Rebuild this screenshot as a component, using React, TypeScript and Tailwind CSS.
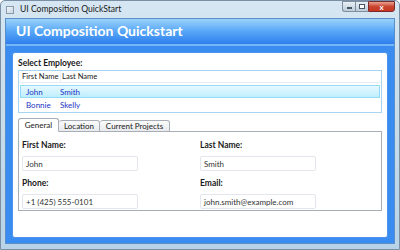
import React from "react";

const font = { fontFamily: 'Lato, "Open Sans", sans-serif' };

function Field({ label, value }: { label: string; value: string }) {
  return (
    <div className="flex flex-col">
      <div className="text-[8.5px] font-bold text-[#1a1a1a] leading-[10px] h-[10px] whitespace-nowrap">{label}</div>
      <div className="mt-[6px] w-[116px] h-[15px] border border-[#e3e6ec] rounded-[2px] bg-white flex items-center pl-[3px] text-[8px] text-[#333] whitespace-nowrap">
        {value}
      </div>
    </div>
  );
}

export default function App() {
  return (
    <div
      className="w-[400px] h-[250px] flex flex-col bg-gradient-to-b from-[#d6e6f3] via-[#c8dceb] to-[#b8d3e8] border border-[#7a8fa3] rounded-t-[5px] overflow-hidden"
      style={font}
    >
      {/* title bar */}
      <div className="h-[17px] flex items-start shrink-0">
        <div className="flex items-center h-[17px] pl-[5px]">
          <div className="w-[8px] h-[8px] bg-gradient-to-br from-[#f4f8fb] to-[#c6d4e0] border border-[#8d9aa8]" />
          <span className="ml-[6px] text-[8.6px] text-[#1b1b1b] whitespace-nowrap">UI Composition QuickStart</span>
        </div>
        <div className="ml-auto mr-[4px] flex h-[11px]">
          <div className="w-[13px] h-[11px] border border-[#7f8f9f] border-r-0 rounded-bl-[3px] bg-gradient-to-b from-[#e9f0f6] to-[#bccbd8] flex items-end justify-center pb-[2px]">
            <div className="w-[5px] h-[2px] bg-white border border-[#4a5563]" />
          </div>
          <div className="w-[13px] h-[11px] border border-[#7f8f9f] border-r-0 bg-gradient-to-b from-[#e9f0f6] to-[#bccbd8] flex items-center justify-center">
            <div className="w-[6px] h-[5px] bg-white border border-[#4a5563]" />
          </div>
          <div className="w-[27px] h-[11px] border border-[#7a2a2a] rounded-br-[3px] bg-gradient-to-b from-[#e9a195] via-[#c9452f] to-[#c8351f] flex items-center justify-center text-white text-[8px] font-bold leading-none">
            x
          </div>
        </div>
      </div>

      {/* client area */}
      <div className="flex-1 mx-[4px] mb-[5px] flex flex-col bg-[#3a8cf0] border border-[#5a8fc9]">
        {/* header */}
        <div className="h-[27px] shrink-0 bg-gradient-to-b from-[#9ad2fb] via-[#56a6f6] to-[#2f7fee] flex items-center pl-[10px] pb-[2px] border-b-[2px] border-[#74b6f6]">
          <span className="text-white font-bold text-[14px] leading-none whitespace-nowrap">UI Composition Quickstart</span>
        </div>
        {/* white panel */}
        <div className="flex-1 mx-[6px] mt-[6px] mb-[5px] bg-white rounded-[3px] border border-[#4f93ec] flex flex-col px-[5px] pt-[5px]">
          <div className="text-[8.5px] font-bold text-[#1a1a1a] leading-[10px] whitespace-nowrap">Select Employee:</div>
          {/* list */}
          <div className="mt-[2px] h-[43px] border border-[#a9d3f2] flex flex-col">
            <div className="h-[12px] flex items-center text-[7.6px] text-[#222] border-b border-[#e6eef6] whitespace-nowrap">
              <span className="pl-[3px] w-[41px]">First Name</span>
              <span className="pl-[1px] border-l border-[#e6eef6]">Last Name</span>
            </div>
            <div className="mt-[2px] h-[13px] mx-[1px] flex items-center text-[8px] text-[#1b35c4] bg-gradient-to-b from-[#e6f9ff] to-[#bfeefd] border border-[#93dcf7] whitespace-nowrap">
              <span className="pl-[5px] w-[39px]">John</span>
              <span>Smith</span>
            </div>
            <div className="h-[13px] mx-[1px] flex items-center text-[8px] text-[#1b35c4] border border-transparent whitespace-nowrap">
              <span className="pl-[5px] w-[39px]">Bonnie</span>
              <span>Skelly</span>
            </div>
          </div>
          {/* tabs */}
          <div className="mt-[5px] flex items-end h-[14px] relative z-10">
            <div className="h-[14px] w-[41px] border border-[#a7aeb7] border-b-white bg-white rounded-t-[3px] flex items-center justify-center text-[8px] text-[#222] whitespace-nowrap">
              General
            </div>
            <div className="h-[12px] w-[41px] border border-[#a7aeb7] border-l-0 bg-gradient-to-b from-[#fbfbfb] to-[#e8eaed] rounded-t-[3px] flex items-center justify-center text-[8px] text-[#222] whitespace-nowrap">
              Location
            </div>
            <div className="h-[12px] w-[70px] border border-[#a7aeb7] border-l-0 bg-gradient-to-b from-[#fbfbfb] to-[#e8eaed] rounded-t-[3px] flex items-center justify-center text-[8px] text-[#222] whitespace-nowrap">
              Current Projects
            </div>
          </div>
          <div className="-mt-[1px] h-[80px] border border-[#a7aeb7] flex px-[3px] pt-[8px]">
            <div className="w-[178px] flex flex-col gap-[7px]">
              <Field label="First Name:" value="John" />
              <Field label="Phone:" value="+1 (425) 555-0101" />
            </div>
            <div className="flex flex-col gap-[7px]">
              <Field label="Last Name:" value="Smith" />
              <Field label="Email:" value="john.smith@example.com" />
            </div>
          </div>
        </div>
      </div>
    </div>
  );
}
